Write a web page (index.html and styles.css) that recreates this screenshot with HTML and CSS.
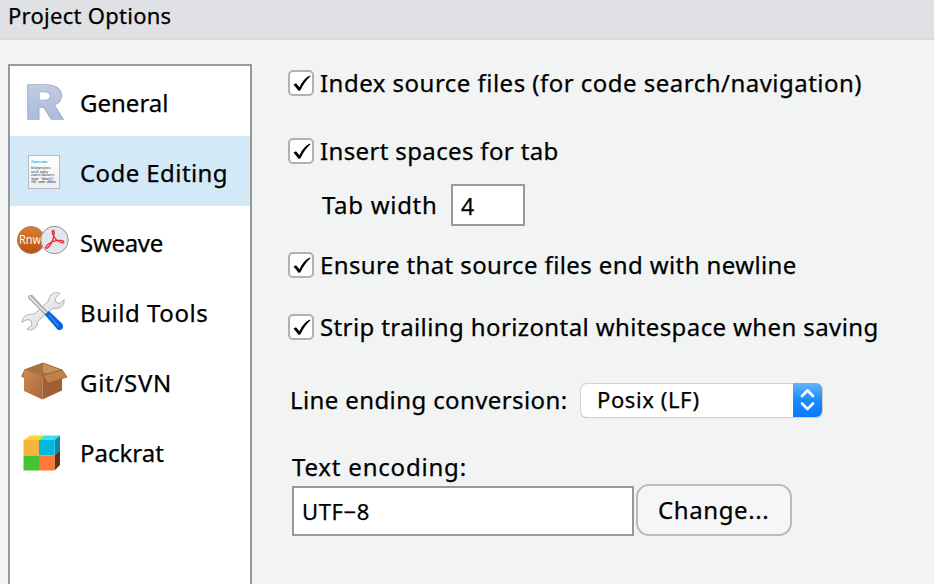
FILE: index.html
```html
<!DOCTYPE html>
<html lang="en">
<head>
<meta charset="utf-8">
<title>Project Options</title>
<link rel="stylesheet" href="styles.css">
</head>
<body>
<header class="titlebar"><span class="t-title">Project Options</span></header>
<div class="dialog">
  <nav class="sidebar">
    <div class="item">
      <svg class="icon" viewBox="0 0 70 70">
        <defs><linearGradient id="r" x1="0" y1="0" x2="0" y2="1"><stop offset="0" stop-color="#c9cfe3"/><stop offset="1" stop-color="#a5b7dc"/></linearGradient></defs>
        <text class="r-logo" x="15" y="52.500" textLength="39" lengthAdjust="spacingAndGlyphs" fill="url(#r)">R</text>
      </svg>
      <span class="t-general">General</span>
    </div>
    <div class="item selected">
      <svg class="icon" viewBox="0 0 70 70">
        <defs><linearGradient id="doc" x1="0" y1="0" x2="0" y2="1"><stop offset="0" stop-color="#fff"/><stop offset="1" stop-color="#eceef2"/></linearGradient></defs>
        <rect x="18.500" y="19.500" width="31" height="33" fill="url(#doc)" stroke="#b4bdc6"/>
        <text class="code fn" x="21" y="26.500" textLength="16">function</text>
        <text class="code" x="21" y="33" textLength="20">blueproject</text>
        <text class="code" x="21" y="36.500" textLength="17">with many</text>
        <text class="code" x="21" y="40" textLength="23">contributors</text>
        <text class="code" x="21" y="43.500" textLength="24">Type 'demo()'</text>
        <text class="code" x="21" y="47" textLength="25">for some demos</text>
      </svg>
      <span class="t-code">Code Editing</span>
    </div>
    <div class="item">
      <svg class="icon" viewBox="0 0 70 70">
        <defs><linearGradient id="rnw" x1="0" y1="0" x2="0" y2="1"><stop offset="0" stop-color="#da8030"/><stop offset="1" stop-color="#bd4f12"/></linearGradient></defs>
        <circle cx="21" cy="34" r="13.500" fill="url(#rnw)" stroke="#a87d62"/>
        <text class="rnw" x="9" y="38" textLength="22" lengthAdjust="spacingAndGlyphs">Rnw</text>
        <circle cx="44.500" cy="34" r="13.700" fill="#e2e5e9" stroke="#8d949f"/>
        <path d="M43.300 24.500c-1.600 0-1 3.200.2 5.300 1.700 3.400 4.800 6.500 8.700 7 2 .2 2-1.600 0-2.100-4.600-.8-10.300.7-14 3.500-2.300 1.800-3.300 4.300-1.500 4.100 2.200-.5 4.600-4.700 6-8.200 1.300-3.600 2.200-9.600.6-9.600z" fill="none" stroke="#ee2532" stroke-width="1.300"/>
      </svg>
      <span class="t-sweave">Sweave</span>
    </div>
    <div class="item">
      <svg class="icon" viewBox="0 0 70 70">
        <defs><linearGradient id="w" x1="0" y1="0" x2="1" y2="1"><stop offset="0" stop-color="#fff"/><stop offset="1" stop-color="#cfd1d3"/></linearGradient></defs>
        <path d="M41 19c3-2.500 6-3 9-1.500l-5 5 1 4 4 1 4-4c.5 4-1 7-5 8.500-3 1-5 0-7 1L28 45c-1 2 0 4-2 6-3 3.500-6 3.500-9 2l5-4-1-4.500-4-1-5 3c0-4.500 3-7 7-8 3-.5 4 0 6-1l13-12c1-2 1-4.500 3-6.500z" fill="url(#w)" stroke="#aeb0b3"/>
        <path d="M20 21l2-3 15 17-2 2z" fill="#c8cacd"/>
        <path d="M20 21l16 16" stroke="#9b9ea2" stroke-width="4" stroke-linecap="round"/>
        <path d="M20 21l16 16" stroke="#dfe1e3" stroke-width="2.200" stroke-linecap="round"/>
        <path d="M34.500 38.500l4.500-3.500 13 12.500q2.500 3.500-.5 6-2 1.500-4 0z" fill="#0966df"/>
        <path d="M39 39l9.500 11" stroke="#338cf4" stroke-width="1.500"/>
      </svg>
      <span class="t-build">Build Tools</span>
    </div>
    <div class="item">
      <svg class="icon" viewBox="0 0 70 70">
        <defs><linearGradient id="bx" x1="0" y1="0" x2="1" y2="1"><stop offset="0" stop-color="#c98b55"/><stop offset="1" stop-color="#aa6735"/></linearGradient></defs>
        <path d="M14 24l19-7 19 7-19 8z" fill="#a87043"/>
        <path d="M33 17v9l10 3 9-5z" fill="#c4905f"/>
        <path d="M14 24l18.500 5.500v24L14 45z" fill="url(#bx)"/>
        <path d="M32.500 29.500L52 24v20.500l-19.500 9z" fill="#9f6034"/>
        <path d="M14 24l-3 6.500 3 1.500z" fill="#b87946"/>
        <path d="M52 23.500l5 7.500-19 6.500-5.500-8z" fill="#c0804c" stroke="#965929" stroke-width=".7"/>
        <path d="M14 24l19-7 19 7" fill="none" stroke="#a66a39"/>
      </svg>
      <span class="t-git">Git/SVN</span>
    </div>
    <div class="item">
      <svg class="icon" viewBox="0 0 70 70">
        <path d="M14 24l6-4.500h16l-5.500 4.500z" fill="#fdd52a"/>
        <path d="M29 24l5.500-4.500H50L44.500 24z" fill="#3ce0f3"/>
        <path d="M44.500 24l5.500-4.500V34l-5.500 5.500z" fill="#078daf"/>
        <path d="M44.500 39.500L50 34v15l-5.500 5.500z" fill="#722c12"/>
        <path d="M13.500 24H29v15.500H13.500z" fill="#f7b43d"/>
        <path d="M29 24h15.500v15.500H29z" fill="#00b9df"/>
        <path d="M13.500 39.500H29v15H13.500z" fill="#48c235"/>
        <path d="M29 39.500h15.500v15H29z" fill="#ff7935"/>
      </svg>
      <span class="t-packrat">Packrat</span>
    </div>
  </nav>
  <main class="panel">
    <div class="check r1"><span class="box"><svg viewBox="0 0 26 26"><path d="M5.500 14.500l2.500-1.300 3.500 4C14 11.500 17.500 7.500 22 5.500l.5.700C18.500 9.500 15.500 14 12.300 20.500l-1.800.3z"/></svg></span><span class="t-index">Index source files (for code search/navigation)</span></div>
    <div class="check r2"><span class="box"><svg viewBox="0 0 26 26"><path d="M5.500 14.500l2.500-1.300 3.500 4C14 11.500 17.500 7.500 22 5.500l.5.700C18.500 9.500 15.500 14 12.300 20.500l-1.800.3z"/></svg></span><span class="t-insert">Insert spaces for tab</span></div>
    <div class="tabwidth"><span class="t-tab">Tab width</span><span class="num">4</span></div>
    <div class="check r3"><span class="box"><svg viewBox="0 0 26 26"><path d="M5.500 14.500l2.500-1.300 3.500 4C14 11.500 17.500 7.500 22 5.500l.5.700C18.500 9.500 15.500 14 12.300 20.500l-1.800.3z"/></svg></span><span class="t-ensure">Ensure that source files end with newline</span></div>
    <div class="check r4"><span class="box"><svg viewBox="0 0 26 26"><path d="M5.500 14.500l2.500-1.300 3.500 4C14 11.500 17.500 7.500 22 5.500l.5.700C18.500 9.500 15.500 14 12.300 20.500l-1.800.3z"/></svg></span><span class="t-strip">Strip trailing horizontal whitespace when saving</span></div>
    <div class="ending"><span class="t-line">Line ending conversion:</span>
      <div class="select"><span class="t-posix">Posix (LF)</span><span class="arrows"><svg viewBox="0 0 29 34"><path d="M9 13l5.500-5.500L20 13M9 20.500l5.500 5.500 5.500-5.500"/></svg></span></div>
    </div>
    <div class="enc-label"><span class="t-text">Text encoding:</span></div>
    <div class="encoding"><span class="field"><span class="t-utf">UTF−8</span></span><span class="button"><span class="t-change">Change...</span></span></div>
  </main>
</div>
</body>
</html>
```
FILE: styles.css
```css
* { box-sizing: border-box; }
body { margin: 0; height: 584px; overflow: hidden; background: #f2f4f4; color: #000; font: 24px/32px "Noto Sans", "Open Sans", sans-serif; white-space: nowrap; }
span { -webkit-text-stroke: .25px #000; }
.titlebar { height: 40px; padding-left: 8px; background: #e0e1e5; border-bottom: 2px solid #d8d9dc; font-size: 22px; line-height: 30px; }
.dialog { display: flex; height: 544px; padding: 24px 0 0 8px; }
.sidebar { width: 244px; height: 540px; flex: none; background: #fff; border: 2px solid #999; }
.item { height: 70px; display: flex; align-items: center; padding-top: 4px; }
.selected { background: #d3e9f7; }
.icon { width: 70px; height: 70px; flex: none; margin-top: -4px; }
.r-logo { font: 900 49px "Roboto", sans-serif; stroke: #9ca9c5; stroke-width: 1.6; paint-order: stroke; }
.code { font: bold 3.5px "Liberation Mono", monospace; fill: #686d79; }
.fn { fill: #00a5d2; }
.rnw { font: 13px "Open Sans", sans-serif; fill: #fff; }
.panel { padding-left: 36px; }
.check { display: flex; align-items: center; height: 34px; gap: 6px; }
.box { width: 26px; height: 26px; border: 2px solid #b1b1b1; border-radius: 5px; background: #fff; display: flex; }
.box svg { width: 26px; height: 26px; margin: -2px; flex: none; }
.r1 { margin-top: 2px; }
.r2 { margin-top: 34px; }
.tabwidth { display: flex; align-items: center; width: 237px; height: 42px; margin-top: 16px; padding-left: 34px; }
.num { width: 74px; height: 42px; border: 2px solid #999; background: #fff; padding: 4px 0 0 8px; margin-left: auto; font-size: 23px; }
.r3 { margin-top: 22px; }
.r4 { margin-top: 28px; }
.ending { display: flex; align-items: center; width: 534px; height: 34px; margin-top: 39px; padding-left: 2px; }
.select { width: 241px; height: 33px; margin-left: auto; display: flex; align-items: center; justify-content: space-between; padding-left: 16px; background: #fff; border-radius: 6px; box-shadow: 0 0 0 1px #d0d0d0, 0 1px 1px #aaa; font-size: 22px; line-height: 30px; }
.t-posix { margin-top: -2px; }
.arrows { width: 29px; height: 34px; border-radius: 0 6px 6px 0; background: linear-gradient(#64b4f8, #1a8dfb 50%, #0a77fa); }
.arrows svg { display: block; width: 29px; height: 34px; fill: none; stroke: #fff; stroke-width: 2.6; stroke-linecap: round; stroke-linejoin: round; }
.enc-label { height: 32px; margin-top: 34px; padding-left: 4px; }
.encoding { display: flex; height: 52px; margin-top: 1px; padding-left: 4px; gap: 2px; }
.field { width: 342px; height: 50px; margin-top: 2px; border: 2px solid #999; background: #fff; padding: 7px 0 0 8px; font-size: 22px; }
.button { width: 156px; height: 52px; border: 2px solid #bbb; border-radius: 13px; background: #f6f6f8; padding: 8px 0 0 20px; }
.t-title { letter-spacing: .27px; }
.t-code { letter-spacing: .42px; }
.t-sweave { letter-spacing: -.3px; }
.t-build { letter-spacing: .55px; }
.t-git { letter-spacing: .7px; }
.t-index { letter-spacing: .48px; }
.t-insert { letter-spacing: .36px; }
.t-tab { letter-spacing: .7px; }
.t-ensure, .t-strip, .t-line { letter-spacing: .39px; }
.t-posix { letter-spacing: .6px; }
.t-text { letter-spacing: .8px; }
.t-utf, .t-change { letter-spacing: .6px; }
```
